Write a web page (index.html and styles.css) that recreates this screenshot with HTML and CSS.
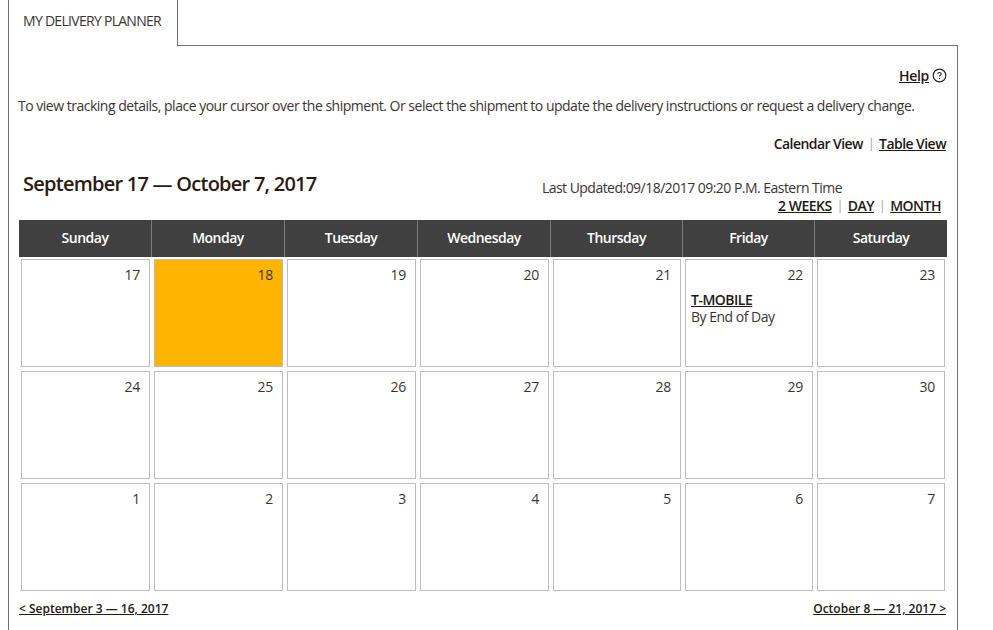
FILE: index.html
```html
<!DOCTYPE html>
<html lang="en">
<head>
    <meta charset="UTF-8">
    <title>My Delivery Planner</title>
    <link rel="stylesheet" href="styles.css">
</head>
<body>
    <div class="tabs">
        <div class="tab">MY DELIVERY PLANNER</div>
        <div class="tab-rest"></div>
    </div>
    <div class="panel">
        <div class="help-row">
            <a href="#">Help</a>
            <svg class="help-icon" width="15" height="15" viewBox="0 0 15 15">
                <circle cx="7.5" cy="7.5" r="6.3" fill="none" stroke="#222" stroke-width="1.2"/>
                <path d="M5.8 6.1c0-1 .8-1.6 1.7-1.6s1.7.6 1.7 1.5c0 1.2-1.7 1.3-1.7 2.6" fill="none" stroke="#222" stroke-width="1.1"/>
                <circle cx="7.5" cy="10.5" r=".7" fill="#222"/>
            </svg>
        </div>
        <p class="intro">To view tracking details, place your cursor over the shipment. Or select the shipment to update the delivery instructions or request a delivery change.</p>
        <div class="view-row">
            <b>Calendar View</b>
            <span class="sep">|</span>
            <a href="#">Table View</a>
        </div>
        <div class="range-row">
            <h1>September 17 — October 7, 2017</h1>
            <div class="range-right">
                <div class="updated">Last Updated:09/18/2017 09:20 P.M. Eastern Time</div>
                <div class="range-links">
                    <a href="#">2 WEEKS</a>
                    <span class="sep">|</span>
                    <a href="#">DAY</a>
                    <span class="sep">|</span>
                    <a href="#">MONTH</a>
                </div>
            </div>
        </div>
        <div class="week-head">
            <div>Sunday</div>
            <div>Monday</div>
            <div>Tuesday</div>
            <div>Wednesday</div>
            <div>Thursday</div>
            <div>Friday</div>
            <div>Saturday</div>
        </div>
        <div class="days">
            <div class="day">17</div>
            <div class="day today">18</div>
            <div class="day">19</div>
            <div class="day">20</div>
            <div class="day">21</div>
            <div class="day">22
                <div class="shipment">
                    <a href="#">T-MOBILE</a>
                    <span>By End of Day</span>
                </div>
            </div>
            <div class="day">23</div>
            <div class="day">24</div>
            <div class="day">25</div>
            <div class="day">26</div>
            <div class="day">27</div>
            <div class="day">28</div>
            <div class="day">29</div>
            <div class="day">30</div>
            <div class="day">1</div>
            <div class="day">2</div>
            <div class="day">3</div>
            <div class="day">4</div>
            <div class="day">5</div>
            <div class="day">6</div>
            <div class="day">7</div>
        </div>
        <div class="pager">
            <a href="#">&lt; September 3 — 16, 2017</a>
            <a href="#">October 8 — 21, 2017 &gt;</a>
        </div>
    </div>
</body>
</html>
```

FILE: styles.css
```css
html, body {
    height: 100%;
}
body {
    margin: 0;
    padding: 0 35px 0 8px;
    overflow: hidden;
    background: #fff;
    color: #3a3432;
    font-family: "Open Sans", Arial, sans-serif;
    font-size: 14px;
}
a {
    color: #231815;
}
.tabs {
    display: flex;
    height: 46px;
}
.tab {
    width: 170px;
    box-sizing: border-box;
    height: 46px;
    padding: 11px 0 0 14px;
    border-left: 1px solid #707070;
    border-right: 1px solid #707070;
    font-size: 14px;
    letter-spacing: -0.71px;
}
.tab-rest {
    flex: 1;
    border-bottom: 1px solid #707070;
}
.panel {
    box-sizing: border-box;
    height: 584px;
    border-left: 1px solid #707070;
    border-right: 1px solid #707070;
    padding: 19px 10px 0;
}
.help-row {
    display: flex;
    justify-content: flex-end;
    align-items: center;
    gap: 3px;
    height: 20px;
    font-weight: 600;
    letter-spacing: -0.3px;
}
.intro {
    margin: 11px 0 0 -1px;
    height: 20px;
    line-height: 20px;
    white-space: nowrap;
    letter-spacing: -0.49px;
}
.view-row {
    display: flex;
    justify-content: flex-end;
    align-items: center;
    gap: 5px;
    height: 20px;
    margin-top: 17px;
    padding-right: 1px;
    font-weight: 600;
    letter-spacing: -0.55px;
    color: #231815;
}
.view-row b {
    font-weight: 600;
}
.sep {
    color: #9aa5ad;
    font-weight: 400;
    font-size: 12px;
}
.range-row {
    display: flex;
    justify-content: space-between;
    margin-top: 17px;
    height: 50px;
}
h1 {
    margin: 0 0 0 4px;
    font-size: 20px;
    font-weight: 600;
    letter-spacing: -0.75px;
    line-height: 28px;
    color: #2b1a14;
}
.range-right {
    padding: 9px 5px 0 0;
    text-align: right;
    line-height: 17px;
}
.updated {
    letter-spacing: -0.53px;
    padding-right: 100px;
    white-space: nowrap;
}
.range-links {
    display: flex;
    justify-content: flex-end;
    gap: 5px;
    margin-top: 1px;
    padding-right: 1px;
    font-weight: 600;
    letter-spacing: -0.5px;
}
.week-head {
    display: grid;
    grid-template-columns: 132px 133px 133px 133px 132px 132px 133px;
    box-sizing: border-box;
    height: 37px;
    background: #404040;
    color: #fff;
    font-weight: 600;
    letter-spacing: -0.5px;
}
.week-head div {
    display: flex;
    align-items: center;
    justify-content: center;
    padding-bottom: 2px;
    border-left: 1px solid #7d7d7d;
}
.week-head div:first-child {
    border-left: none;
}
.days {
    display: grid;
    grid-template-columns: 129px 129px 129px 129px 128px 128px 128px;
    grid-auto-rows: 108px;
    gap: 4px;
    padding: 2px 2px 0;
}
.day {
    box-sizing: border-box;
    border: 1px solid #bdbdbd;
    padding: 6px 9px 0 5px;
    text-align: right;
    line-height: 18px;
    letter-spacing: -0.3px;
}
.today {
    background: #ffb500;
}
.shipment {
    margin-top: 7px;
    text-align: left;
    line-height: 17px;
}
.shipment a {
    display: block;
    font-weight: 600;
    letter-spacing: -0.5px;
    color: #231815;
}
.shipment span {
    display: block;
    letter-spacing: -0.5px;
}
.pager {
    display: flex;
    justify-content: space-between;
    margin-top: 9px;
    padding-right: 1px;
    font-size: 12px;
    font-weight: 600;
    letter-spacing: 0;
}
```
